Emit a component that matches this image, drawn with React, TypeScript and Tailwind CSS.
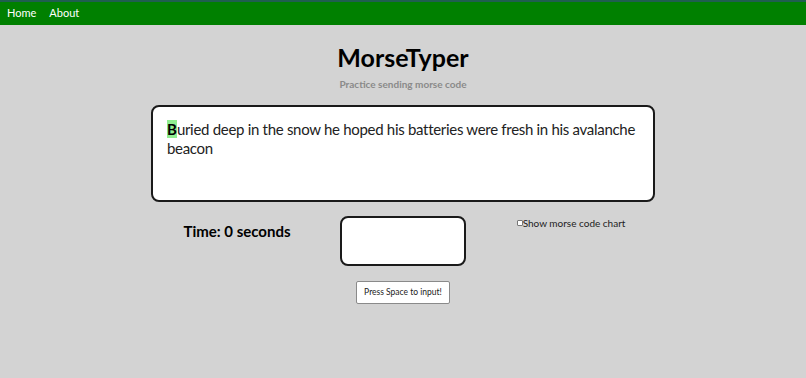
import React from 'react';

const font = { fontFamily: 'Lato, "Open Sans", sans-serif' };

const sentence = 'Buried deep in the snow he hoped his batteries were fresh in his avalanche beacon';

const App: React.FC = () => {
  return (
    <div className="min-h-[378px] bg-[#d3d3d3] text-black" style={font}>
      {/* nav */}
      <nav className="h-[25px] bg-[#008000] border-t-2 border-[#1f5f4f] flex items-center px-[7px] gap-[13px] text-[11px] text-white">
        <span>Home</span>
        <span>About</span>
      </nav>

      <div className="flex flex-col items-center">
        <h1 className="mt-[16px] text-[25px] font-bold leading-[32px]">MorseTyper</h1>
        <p className="mt-[5px] text-[10px] font-bold text-[#8a8a8a] leading-[12px]">Practice sending morse code</p>

        {/* sentence box */}
        <div className="mt-[15px] w-[504px] h-[97px] bg-white border-2 border-[#1a1a1a] rounded-[8px] pl-[14px] pr-[8px] pt-[13px] text-[15px] tracking-[-0.3px] leading-[19px] text-[#222]">
          <span className="bg-[#90ee90] font-bold text-black tracking-normal">{sentence[0]}</span>
          {sentence.slice(1)}
        </div>

        {/* controls */}
        <div className="mt-[14px] w-[504px] flex items-start">
          <div className="w-[168px] flex justify-center pt-[5px] pl-[4px]">
            <span className="text-[15px] font-bold leading-[20px]">Time: 0 seconds</span>
          </div>
          <div className="w-[168px] flex justify-center">
            <div className="w-[126px] h-[50px] bg-white border-2 border-[#1a1a1a] rounded-[8px]" />
          </div>
          <div className="w-[168px] flex justify-center">
            <label className="flex items-center text-[10px] leading-[14px] text-[#222]">
              <span className="w-[6px] h-[6px] border border-[#777] bg-white rounded-[1px]" />
              Show morse code chart
            </label>
          </div>
        </div>

        <button className="mt-[15px] h-[23px] px-[7px] bg-white border border-[#8a8a8a] rounded-[2px] text-[8.5px] text-[#222]">
          Press Space to input!
        </button>
      </div>
    </div>
  );
};

export default App;
